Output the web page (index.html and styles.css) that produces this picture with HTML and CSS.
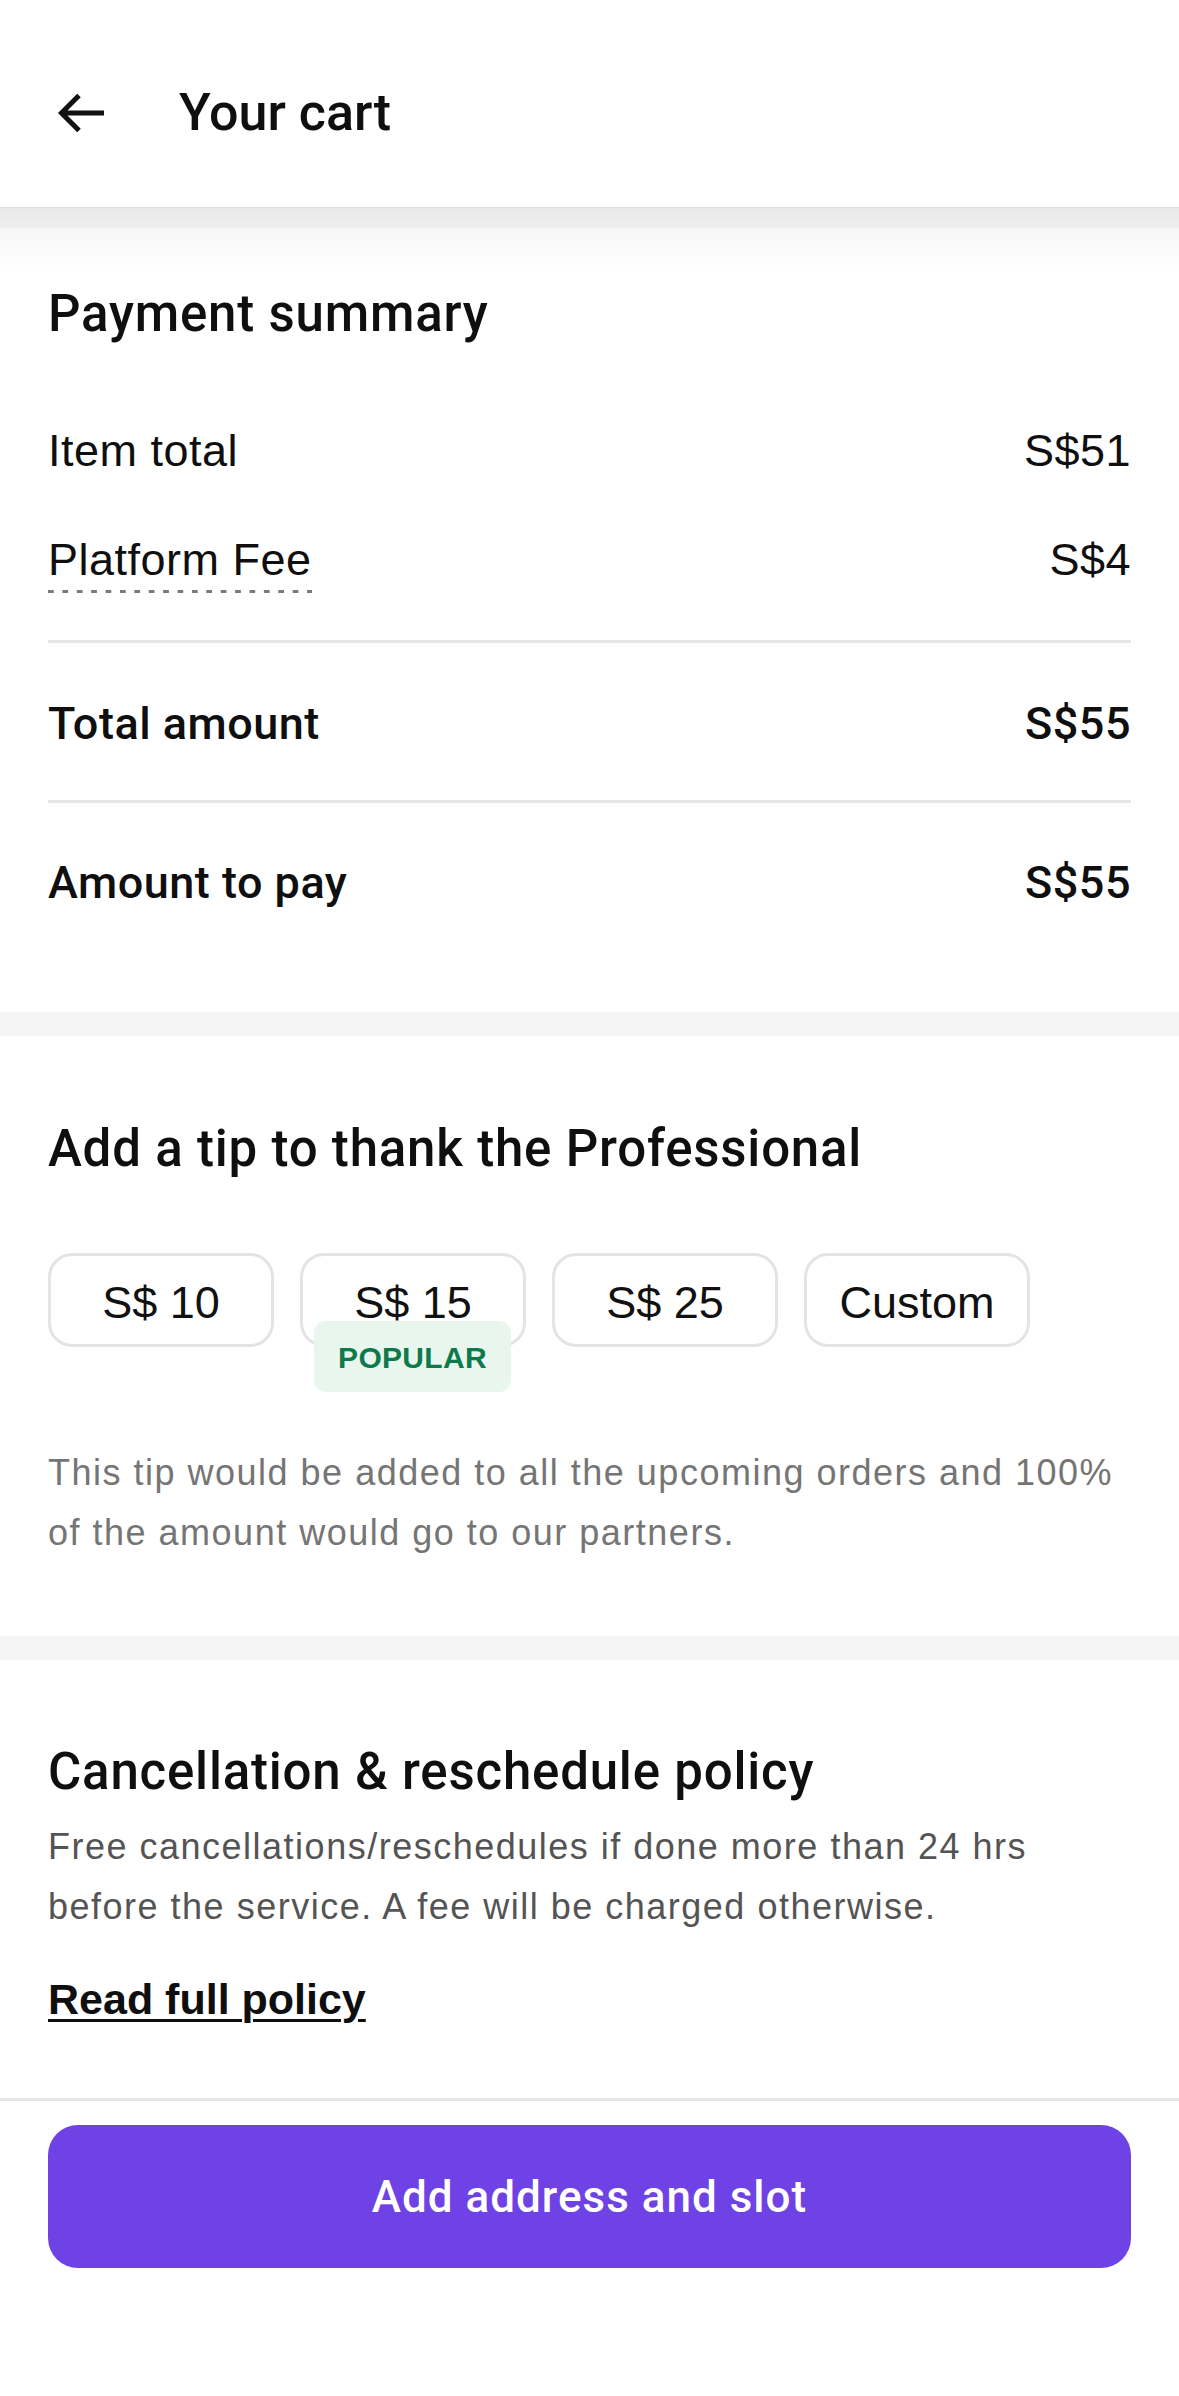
FILE: index.html
```html
<!DOCTYPE html>
<html>
    <head>
    <meta charset="utf-8">
    <meta name="viewport" content="width=device-width, initial-scale=1.0">
    <title>Your cart</title>
    <link rel="stylesheet" href="styles.css">
    </head>

    <body>
    <div class="page">
        <header class="topbar">
            <a class="back" href="#">
                <svg width="48" height="42" viewBox="0 0 48 42">
                    <path d="M47 21H5M22 3.5L4.5 21L22 38.5" fill="none" stroke="#111" stroke-width="5"/>
                </svg>
            </a>
            <h1 class="title">Your cart</h1>
        </header>
        <div class="shade"></div>

        <section class="card summary">
            <h2 class="card-title">Payment summary</h2>
            <div class="lines">
                <div class="row"><span>Item total</span><span>S$51</span></div>
                <div class="row"><span class="dotted">Platform Fee</span><span>S$4</span></div>
            </div>
            <div class="row strong total"><span>Total amount</span><span>S$55</span></div>
            <div class="row strong pay"><span>Amount to pay</span><span>S$55</span></div>
        </section>
        <div class="gap"></div>

        <section class="card tip">
            <h2 class="card-title">Add a tip to thank the Professional</h2>
            <div class="tip-options">
                <button class="tip-btn">S$ 10</button>
                <button class="tip-btn">S$ 15<span class="badge">POPULAR</span></button>
                <button class="tip-btn">S$ 25</button>
                <button class="tip-btn">Custom</button>
            </div>
            <p class="note">This tip would be added to all the upcoming orders and 100% of the amount would go to our partners.</p>
        </section>
        <div class="gap"></div>

        <section class="card policy">
            <h2 class="card-title">Cancellation &amp; reschedule policy</h2>
            <p class="note dark">Free cancellations/reschedules if done more than 24 hrs before the service. A fee will be charged otherwise.</p>
            <a class="policy-link" href="#">Read full policy</a>
        </section>

        <footer class="footer">
            <button class="cta">Add address and slot</button>
        </footer>
    </div>
    </body>
</html>
```

FILE: styles.css
```css
body {
    margin: 0;
    padding: 0;
    font-family: "Liberation Sans", Arial, sans-serif;
    color: #0f0f0f;
    background-color: #fff;
}
.page{
    display: flex;
    flex-direction: column;
    min-height: 100vh;
}
.topbar{
    height: 208px;
    box-sizing: border-box;
    padding: 18px 0 0 57px;
    display: flex;
    align-items: center;
    gap: 74px;
    border-bottom: 1px solid #dedede;
}
.back svg{
    display: block;
}
.title{
    margin: 0;
    font: 500 52px/60px Roboto, sans-serif;
}
.shade{
    height: 20px;
    background: linear-gradient(#e9e9e9, #eeeeee);
}
.gap{
    height: 24px;
    background-color: #f5f5f5;
}
.card{
    background-color: #fff;
    padding-left: 48px;
    padding-right: 48px;
}
.card-title{
    margin: 0;
    font: 500 51px/60px Roboto, sans-serif;
    letter-spacing: 0.8px;
}

/* payment summary */
.summary{
    padding-top: 56px;
    padding-bottom: 99px;
    background: linear-gradient(#f6f6f6, #fff 44px);
}
.lines{
    margin-top: 77px;
    padding-bottom: 47px;
    border-bottom: 3px solid #e6e6e6;
}
.row{
    display: flex;
    justify-content: space-between;
    align-items: baseline;
    font-size: 45px;
    line-height: 60px;
    letter-spacing: 0.5px;
}
.lines .row + .row{
    margin-top: 49px;
}
.dotted{
    padding-bottom: 3px;
    background: linear-gradient(90deg, #7a7a7a 6px, transparent 6px) 0 100% / 14.4px 3px repeat-x;
}
.strong{
    font: 500 45px/60px Roboto, sans-serif;
}
.total{
    margin-top: 51px;
    padding-bottom: 46px;
    border-bottom: 3px solid #e6e6e6;
}
.pay{
    margin-top: 50px;
}

/* tip */
.tip{
    padding-top: 83px;
    padding-bottom: 73px;
}
.tip-options{
    margin-top: 74px;
    display: flex;
    gap: 26px;
}
.tip-btn{
    position: relative;
    width: 226px;
    height: 94px;
    box-sizing: border-box;
    padding: 6px 0 0;
    border: 3px solid #e4e4e4;
    border-radius: 24px;
    background-color: #fff;
    color: #111;
    font-family: "Liberation Sans", Arial, sans-serif;
    font-size: 45px;
}
.badge{
    position: absolute;
    left: 11px;
    right: 12px;
    top: 65px;
    height: 71px;
    box-sizing: border-box;
    padding-top: 2px;
    border-radius: 12px;
    background-color: #e9f6ee;
    color: #0c7a4b;
    font-weight: bold;
    font-size: 30px;
    line-height: 69px;
    letter-spacing: 0.3px;
    text-align: center;
}
.note{
    margin: 96px 0 0;
    font-size: 36px;
    line-height: 60px;
    letter-spacing: 1.5px;
    color: #757575;
}

/* policy */
.policy{
    padding-top: 82px;
    padding-bottom: 69px;
}
.policy .note{
    margin-top: 15px;
}
.note.dark{
    color: #545454;
}
.policy-link{
    display: block;
    margin-top: 32px;
    font-size: 43px;
    font-weight: bold;
    line-height: 60px;
    color: #0f0f0f;
    text-decoration: underline;
    text-decoration-thickness: 3px;
    text-underline-offset: 5px;
}

/* bottom bar */
.footer{
    flex: 1;
    border-top: 3px solid #e6e6e6;
    padding: 24px 48px 0;
}
.cta{
    display: block;
    width: 100%;
    height: 143px;
    border: 0;
    border-radius: 30px;
    background-color: #6e42e5;
    color: #fff;
    font: 500 44px Roboto, sans-serif;
    letter-spacing: 1px;
}
```
